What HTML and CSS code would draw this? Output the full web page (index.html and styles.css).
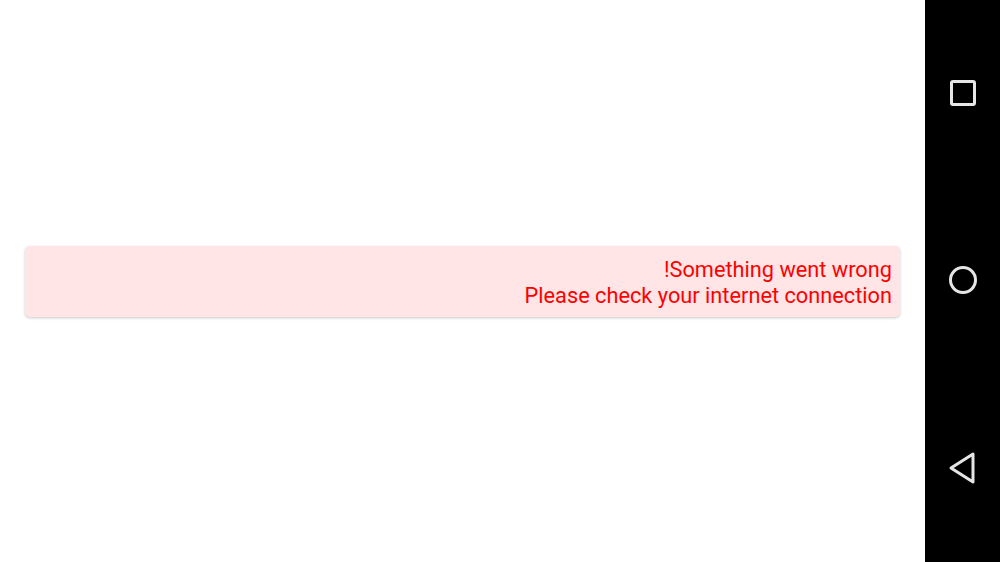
FILE: index.html
```html
<!DOCTYPE html>
<html>
<head>
<meta charset="utf-8">
<link rel="stylesheet" href="styles.css">
</head>
<body>
<div class="screen">
  <main class="content">
    <div class="error-card">
      <div class="error-line">!Something went wrong</div>
      <div class="error-line">Please check your internet connection</div>
    </div>
  </main>
  <nav class="navbar">
    <svg class="nav-icon" width="30" height="30" viewBox="0 0 30 30"><rect x="3.5" y="3.5" width="23" height="23" rx="1.5" fill="none" stroke="#e6e6e6" stroke-width="3"/></svg>
    <svg class="nav-icon" width="32" height="32" viewBox="0 0 32 32"><circle cx="16" cy="16" r="12.5" fill="none" stroke="#e6e6e6" stroke-width="3"/></svg>
    <svg class="nav-icon" width="30" height="34" viewBox="0 0 30 34"><path d="M25 3 L3 17 L25 31 Z" fill="none" stroke="#e6e6e6" stroke-width="3" stroke-linejoin="round"/></svg>
  </nav>
</div>
</body>
</html>
```

FILE: styles.css
```css
html, body {
  margin: 0;
  padding: 0;
  background: #ffffff;
}
.screen {
  display: flex;
  width: 1000px;
  height: 562px;
}
.content {
  flex: 1;
  display: flex;
  flex-direction: column;
  justify-content: center;
  padding: 0 25px;
}
.error-card {
  background: #ffe5e6;
  border-radius: 5px;
  box-shadow: 0 1px 3px rgba(0, 0, 0, 0.22);
  padding: 11px 8px 8px 8px;
  text-align: right;
  font-family: Roboto, "Noto Sans", sans-serif;
  font-size: 21.75px;
  line-height: 26px;
  color: #ff0000;
}
.navbar {
  width: 75px;
  background: #000000;
  display: flex;
  flex-direction: column;
  align-items: center;
  justify-content: space-between;
  padding: 78px 0 77px;
  box-sizing: border-box;
}
.nav-icon {
  display: block;
}
```
